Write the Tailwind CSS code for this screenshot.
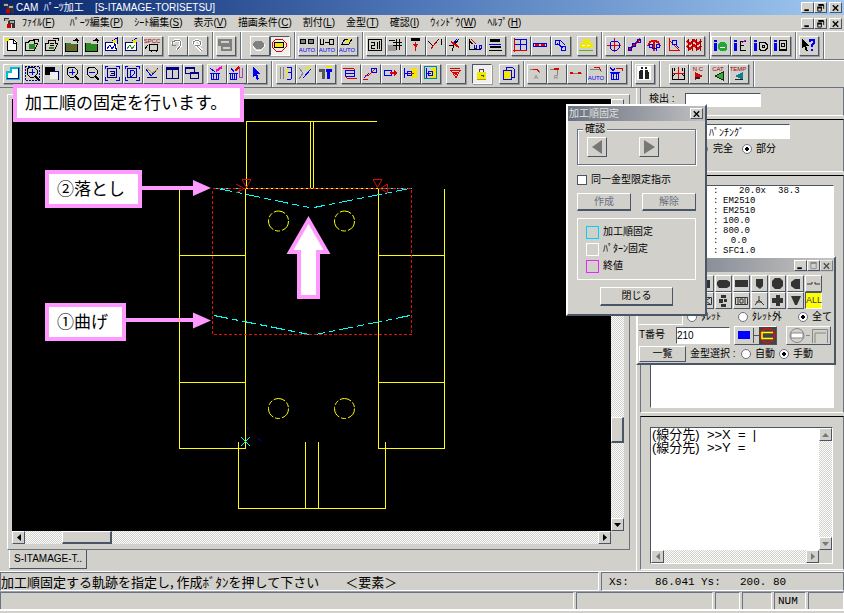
<!DOCTYPE html>
<html lang="ja">

<head>
    <meta charset="UTF-8">
    <meta name="viewport" content="width=device-width, initial-scale=1.0">
    <title>CAM パーツ加工</title>
    <script src="https://cdn.jsdelivr.net/npm/@tailwindcss/browser@4"></script>
</head>

<body class="h-screen min-h-[560px] flex flex-col overflow-hidden bg-[#d2d0ca] text-black text-[10px] leading-[12px] font-['Liberation_Sans','Noto_Sans_CJK_JP',sans-serif]">
    <!-- title bar -->
    <header class="h-[15px] shrink-0 flex items-center pl-[3px] pr-[2px] text-white bg-linear-to-r from-[#0a246a] via-[#5078b8] to-[#a0c8f0]">
        <svg class="w-3 h-3" viewBox="0 0 12 12" shape-rendering="crispEdges"><path d="M0 1h5v3H0zM4 3h7v8H8V7H4z" fill="#333"/><path d="M1 2h4v2H1zM6 4h4v2H6z" fill="#aaa"/><path d="M3 7h4v4H3z" fill="#c00"/></svg>
        <h1 class="flex-1 pl-px whitespace-pre">CAM  ﾊﾟｰﾂ加工    [S-ITAMAGE-TORISETSU]</h1>
        <div class="flex text-black" data-win="restore"></div>
    </header>

    <!-- menu bar -->
    <nav class="h-4 shrink-0 flex items-center pl-1 pr-[2px]">
        <svg class="w-3 h-3 mr-[6px]" viewBox="0 0 12 12" shape-rendering="crispEdges"><path d="M0 1h5v3H0zM4 3h7v8H8V7H4z" fill="#333"/><path d="M1 2h4v2H1zM6 4h4v2H6z" fill="#aaa"/><path d="M3 7h4v4H3z" fill="#c00"/></svg>
        <div class="flex-1 flex gap-[11px] whitespace-nowrap">
            <button class="mr-1">ﾌｧｲﾙ(<u>F</u>)</button>
            <button>ﾊﾟｰﾂ編集(<u>P</u>)</button>
            <button>ｼｰﾄ編集(<u>S</u>)</button>
            <button>表示(<u>V</u>)</button>
            <button>描画条件(<u>C</u>)</button>
            <button>割付(<u>L</u>)</button>
            <button>金型(<u>T</u>)</button>
            <button>確認(<u>I</u>)</button>
            <button>ｳｨﾝﾄﾞｳ(<u>W</u>)</button>
            <button>ﾍﾙﾌﾟ(<u>H</u>)</button>
        </div>
        <div class="flex" data-win="restore"></div>
    </nav>

    <div id="bar1" class="h-[29px] shrink-0 flex items-center border-t border-t-white border-b border-b-gray-500"></div>
    <div id="bar2" class="h-7 shrink-0 flex items-center border-t border-t-white border-b border-b-gray-500"></div>

    <main class="relative flex-1 min-h-0 flex">
        <!-- drawing view -->
        <section class="flex-1 min-w-0 flex flex-col pt-[6px] pl-[7px] pr-[6px] pb-[2px]">
            <div class="flex-1 min-h-0 grid grid-cols-[1fr_13px] grid-rows-[1fr_13px] pt-1 pl-1 pr-[5px] pb-[5px] border border-t-white border-l-white border-r-gray-500 border-b-gray-500">
                <div class="relative bg-black min-h-0">
                    <svg class="w-[599px] h-[431px] max-h-full" viewBox="12 99 599 431" preserveAspectRatio="xMinYMin slice" fill="none">
                        <g stroke="#ff0" shape-rendering="crispEdges">
                            <path d="M246.5 188V121.5H377M310.5 122v66M313.5 122v66M246 188.5h132"/>
                            <path d="M179.5 189v259.500H245.500V188M179 255.500h67M179 382.500h67"/>
                            <path d="M444.500 189v259.500H378.500V188M378 255.500h67M378 382.500h67"/>
                            <path d="M238.500 442v66.500H385.500V442M305.500 442v66M318.500 442v66"/>
                        </g>
                        <g stroke="#ff0" stroke-dasharray="12 2 5 2">
                            <circle cx="278.500" cy="221" r="10"/><circle cx="344.500" cy="221" r="10"/>
                            <circle cx="278.500" cy="408.500" r="10"/><circle cx="344.500" cy="408.500" r="10"/>
                        </g>
                        <g stroke="#0ff" stroke-dasharray="14 4 7 4" shape-rendering="crispEdges">
                            <path d="M216 188.500h30M379 188.500h33"/>
                            <path d="M218 188.500L309 207.500M410 188.500L314 207.500M214 315.500L309 334.500M410 315.500L316 334.500"/>
                        </g>
                        <path d="M212.500 188.500h199v146h-199z" stroke="#e01010" stroke-dasharray="3 2" shape-rendering="crispEdges"/>
                        <path d="M242 179.500h9l-4.500 8zM373 179.500h9l-4.500 8zM236 184l8 4.500-8 4.500M387.500 184v9l-7-4.500z" stroke="#d01010"/>
                        <path d="M241 437l9 9M250 437l-9 9" stroke="#0ff"/>
                        <path d="M247 428l2 1M258 438l3 3" stroke="#00f"/>
                        <path d="M142 188h52M126 320h68" stroke="#f9f" stroke-width="4"/>
                        <path d="M193 180l18 8-18 8zM193 312.500l18 8-18 8z" fill="#f9f"/>
                        <path d="M308.500 220L327 252h-9v45h-19v-45h-9z" fill="#fff" stroke="#f9f" stroke-width="4"/>
                    </svg>
                    <!-- callouts -->
                    <p class="absolute left-px -top-[15px] w-[231px] h-[38px] border-4 border-[#ff99ff] bg-white px-2 text-[17px] leading-[32px] whitespace-nowrap">加工順の固定を行います。</p>
                    <p class="absolute left-[33px] top-[71px] w-[97px] h-[38px] border-4 border-[#ff99ff] bg-white px-2 text-[17px] leading-[32px] whitespace-nowrap">②落とし</p>
                    <p class="absolute left-[33px] top-[204px] w-[81px] h-[38px] border-4 border-[#ff99ff] bg-white px-2 text-[17px] leading-[32px] whitespace-nowrap">①曲げ</p>
                </div>
                <div class="flex flex-col bg-[repeating-conic-gradient(#ffffff_0_25%,#d2d0ca_0_50%)] bg-[size:2px_2px]">
                    <button class="h-[13px] border border-white border-r-gray-600 border-b-gray-600 bg-[#d2d0ca] flex items-center justify-center" aria-label="上へ"><svg class="w-[7px] h-1" viewBox="0 0 7 4"><path d="M0 4L3.500 0 7 4z"/></svg></button>
                    <div class="flex-1"></div>
                    <div class="h-[26px] mb-[75px] border border-white border-r-2 border-b-2 border-r-gray-600 border-b-gray-600 bg-[#d2d0ca]"></div>
                    <button class="h-[13px] border border-white border-r-gray-600 border-b-gray-600 bg-[#d2d0ca] flex items-center justify-center" aria-label="下へ"><svg class="w-[7px] h-1" viewBox="0 0 7 4"><path d="M0 0L3.500 4 7 0z"/></svg></button>
                </div>
                <div class="flex bg-[repeating-conic-gradient(#ffffff_0_25%,#d2d0ca_0_50%)] bg-[size:2px_2px]">
                    <button class="w-[13px] border border-white border-r-gray-600 border-b-gray-600 bg-[#d2d0ca] flex items-center justify-center" aria-label="左へ"><svg class="w-1 h-[7px]" viewBox="0 0 4 7"><path d="M4 0L0 3.500 4 7z"/></svg></button>
                    <div class="w-[50px] ml-[37px] border border-white border-r-2 border-b-2 border-r-gray-600 border-b-gray-600 bg-[#d2d0ca]"></div>
                    <div class="flex-1"></div>
                    <button class="w-[13px] border border-white border-r-gray-600 border-b-gray-600 bg-[#d2d0ca] flex items-center justify-center" aria-label="右へ"><svg class="w-1 h-[7px]" viewBox="0 0 4 7"><path d="M0 0l4 3.500L0 7z"/></svg></button>
                </div>
            </div>
            <button class="w-[78px] h-[19px] ml-[2px] pl-1 text-left whitespace-nowrap border border-t-0 border-l-white border-r-gray-600 border-b-gray-600">S-ITAMAGE-T..</button>
        </section>

        <!-- side panels -->
        <aside class="w-[208px] shrink-0 flex flex-col gap-[3px] pl-[3px] border-l border-l-white">
            <div class="h-7 flex items-start pt-[5px] pl-2 border-x border-x-gray-500 border-b border-b-white">
                <label for="find" class="w-9">検出 :</label>
                <input id="find" class="w-[76px] h-[14px] bg-white border border-t-gray-600 border-l-gray-600 border-white">
            </div>
            <div class="h-[53px] flex flex-col gap-1 pt-1 border border-x-gray-500 border-t-black border-b-white">
                <input aria-label="加工" value="ﾊﾟﾝﾁﾝｸﾞ" class="ml-[9px] w-[140px] h-[15px] pl-[58px] bg-white border border-t-gray-600 border-l-gray-600 border-white">
                <div class="flex items-center ml-[57px]">
                    <label class="w-11 flex items-center gap-[5px]"><input type="radio" name="area" class="appearance-none w-[10px] h-[10px] rounded-full border border-gray-500 bg-white checked:bg-[radial-gradient(#000_30%,#fff_35%)]">完全</label>
                    <label class="flex items-center gap-1"><input type="radio" name="area" checked class="appearance-none w-[10px] h-[10px] rounded-full border border-gray-500 bg-white checked:bg-[radial-gradient(#000_30%,#fff_35%)]">部分</label>
                </div>
            </div>
            <div class="flex-1 min-h-0 p-[9px] pb-1 border border-x-gray-500 border-t-black border-b-white">
                <div class="h-full bg-white border border-t-gray-600 border-l-gray-600 border-white pl-[62px] overflow-hidden text-[9px] leading-[10px] font-['Liberation_Mono',monospace]">
                    <dl id="info" class="grid grid-cols-[10px_24px_1fr]"></dl>
                </div>
            </div>
            <div class="h-[154px] mb-px pt-[10px] pb-[5px] pl-[9px] pr-[10px] border border-x-gray-500 border-t-black border-b-white">
                <div class="h-full grid grid-cols-[1fr_13px] grid-rows-[1fr_13px] border border-t-gray-600 border-l-gray-600 border-white">
                    <textarea aria-label="座標入力" class="resize-none overflow-hidden bg-white pl-px text-[13px] leading-[13px]">(線分先)  &gt;&gt;X  =  |
(線分先)  &gt;&gt;Y  =</textarea>
                    <div class="flex flex-col justify-between bg-[repeating-conic-gradient(#ffffff_0_25%,#d2d0ca_0_50%)] bg-[size:2px_2px]">
                        <button class="h-[13px] border border-white border-r-gray-600 border-b-gray-600 bg-[#d2d0ca] flex items-center justify-center" aria-label="上へ"><svg class="w-[7px] h-1" viewBox="0 0 7 4" fill="#777"><path d="M0 4L3.500 0 7 4z"/></svg></button>
                        <button class="h-[13px] border border-white border-r-gray-600 border-b-gray-600 bg-[#d2d0ca] flex items-center justify-center" aria-label="下へ"><svg class="w-[7px] h-1" viewBox="0 0 7 4" fill="#777"><path d="M0 0L3.500 4 7 0z"/></svg></button>
                    </div>
                    <div class="flex justify-between bg-[repeating-conic-gradient(#ffffff_0_25%,#d2d0ca_0_50%)] bg-[size:2px_2px]">
                        <button class="w-[13px] border border-white border-r-gray-600 border-b-gray-600 bg-[#d2d0ca] flex items-center justify-center" aria-label="左へ"><svg class="w-1 h-[7px]" viewBox="0 0 4 7" fill="#777"><path d="M4 0L0 3.500 4 7z"/></svg></button>
                        <button class="w-[13px] border border-white border-r-gray-600 border-b-gray-600 bg-[#d2d0ca] flex items-center justify-center" aria-label="右へ"><svg class="w-1 h-[7px]" viewBox="0 0 4 7" fill="#777"><path d="M0 0l4 3.500L0 7z"/></svg></button>
                    </div>
                </div>
            </div>
        </aside>

        <!-- tool palette window -->
        <div class="absolute right-2 top-[168px] w-[200px] h-[109px] flex flex-col bg-[#d2d0ca] border-2 border-t-white border-l-white border-r-gray-600 border-b-gray-600">
            <div class="h-[14px] shrink-0 flex items-center justify-end pr-px bg-linear-to-r from-gray-500 to-[#c8c6c2]" data-win="max"></div>
            <div id="tools" class="grid grid-cols-[repeat(7,17px)] gap-x-px justify-end pt-[3px] pr-3"></div>
            <div class="h-4 shrink-0 flex items-center pl-px">
                <div class="w-11 h-full flex items-start justify-center border-b border-r border-white"><i class="w-2 h-[5px] bg-red-700"></i></div>
                <label class="w-[51px] flex items-center gap-1 ml-1"><input type="radio" name="turret" class="appearance-none w-[10px] h-[10px] rounded-full border border-gray-500 bg-white checked:bg-[radial-gradient(#000_30%,#fff_35%)]">ﾀﾚｯﾄ</label>
                <label class="w-[60px] flex items-center gap-1"><input type="radio" name="turret" class="appearance-none w-[10px] h-[10px] rounded-full border border-gray-500 bg-white checked:bg-[radial-gradient(#000_30%,#fff_35%)]">ﾀﾚｯﾄ外</label>
                <label class="flex items-center gap-1 whitespace-nowrap"><input type="radio" name="turret" checked class="appearance-none w-[10px] h-[10px] rounded-full border border-gray-500 bg-white checked:bg-[radial-gradient(#000_30%,#fff_35%)]">全て</label>
            </div>
            <div class="h-5 shrink-0 flex items-center pl-px">
                <label for="tno" class="w-[37px] whitespace-nowrap">T番号</label>
                <input id="tno" value="210" class="w-[54px] h-[17px] bg-white border border-t-gray-600 border-l-gray-600 border-white">
                <button aria-label="形状" class="ml-1 w-[43px] h-[19px] border border-white border-r-gray-600 border-b-gray-600">
                    <svg class="w-full h-full" viewBox="0 0 41 17"><path d="M3 4h12v8H3z" fill="#00f"/><path d="M18.500 1v15" stroke="#555"/><path d="M19 8.500h5" stroke="#555"/><path d="M24 0h17v17H24z" fill="#444"/><circle cx="32.500" cy="8.500" r="7" fill="none" stroke="#e01010" stroke-width="1.500"/><path d="M38 5.500H27v6h11" fill="none" stroke="#ff0" stroke-width="1.500"/></svg>
                </button>
                <button aria-label="方向" class="ml-[9px] w-[45px] h-[19px] border border-white border-r-gray-600 border-b-gray-600">
                    <svg class="w-full h-full" viewBox="0 0 43 17" fill="none" stroke="#888"><circle cx="10" cy="8.500" r="7"/><path d="M4 6h12v5H4z" fill="#fff"/><path d="M19 8.500h4M25.500 16V2.500h15V16M28 16V6h11" /></svg>
                </button>
            </div>
            <div class="h-[17px] shrink-0 flex items-center pl-px">
                <button class="w-[47px] h-4 border border-white border-r-gray-600 border-b-gray-600">一覧</button>
                <span class="w-[55px] pl-1 whitespace-nowrap">金型選択 :</span>
                <label class="w-[38px] flex items-center gap-1 whitespace-nowrap"><input type="radio" name="sel" class="appearance-none w-[10px] h-[10px] rounded-full border border-gray-500 bg-white checked:bg-[radial-gradient(#000_30%,#fff_35%)]">自動</label>
                <label class="flex items-center gap-1 whitespace-nowrap"><input type="radio" name="sel" checked class="appearance-none w-[10px] h-[10px] rounded-full border border-gray-500 bg-white checked:bg-[radial-gradient(#000_30%,#fff_35%)]">手動</label>
            </div>
        </div>

        <!-- dialog -->
        <div class="absolute right-[137px] top-4 w-[141px] h-[212px] flex flex-col bg-[#d2d0ca] border-2 border-t-white border-l-white border-r-gray-600 border-b-gray-600">
            <div class="h-[15px] shrink-0 flex items-center justify-between pl-px pr-[2px] bg-linear-to-r from-gray-500 to-[#c0c0c0] text-[#e4e2dc]">
                <h2>加工順固定</h2>
                <div class="flex text-black" data-win="close"></div>
            </div>
            <div class="flex-1 flex flex-col px-[9px] pt-[2px]">
                <fieldset class="h-[42px] flex justify-between pl-[9px] pr-9 border border-gray-500 shadow-[inset_1px_1px_#fff,1px_1px_#fff]">
                    <legend class="-ml-1 px-[2px] bg-[#d2d0ca]">確認</legend>
                    <button aria-label="前へ" class="w-5 h-5 mt-[2px] border border-white border-r-gray-600 border-b-gray-600"><svg class="w-full h-full" viewBox="0 0 18 18" fill="#777"><path d="M14 2v14L4 9z"/></svg></button>
                    <button aria-label="次へ" class="w-5 h-5 mt-[2px] border border-white border-r-gray-600 border-b-gray-600"><svg class="w-full h-full" viewBox="0 0 18 18" fill="#777"><path d="M4 2v14l11-7z"/></svg></button>
                </fieldset>
                <label class="flex items-center gap-1 mt-[9px] whitespace-nowrap"><input type="checkbox" class="appearance-none w-[10px] h-[10px] bg-white border border-gray-600">同一金型限定指示</label>
                <div class="flex justify-between mt-[7px] text-gray-500">
                    <button class="w-[54px] h-[18px] border border-white border-r-gray-600 border-b-gray-600 border-b-2" disabled>作成</button>
                    <button class="w-[54px] h-[18px] border border-white border-r-gray-600 border-b-gray-600 border-b-2" disabled>解除</button>
                </div>
                <ul class="h-[62px] mt-[7px] flex flex-col justify-center gap-[4px] pl-2 border border-white">
                    <li class="flex items-center gap-1"><i class="w-[13px] h-[13px] border border-cyan-400"></i>加工順固定</li>
                    <li class="flex items-center gap-1"><i class="w-[13px] h-[13px] border border-white"></i>ﾊﾟﾀｰﾝ固定</li>
                    <li class="flex items-center gap-1"><i class="w-[13px] h-[13px] border border-fuchsia-500"></i>終値</li>
                </ul>
                <button class="w-[73px] h-[19px] mt-[7px] mx-auto border border-white border-r-gray-600 border-b-gray-600 border-b-2">閉じる</button>
            </div>
        </div>
    </main>

    <!-- status bars -->
    <footer class="shrink-0 border-t border-t-white text-[13px] leading-[16px] whitespace-nowrap">
        <div class="h-5 flex gap-[2px] border-b border-b-gray-400">
            <p class="flex-1 flex items-center gap-[26px] border border-gray-500 border-b-white border-r-white font-['Noto_Sans_CJK_JP',sans-serif]"><span>加工順固定する軌跡を指定し, 作成ﾎﾞﾀﾝを押して下さい</span><span>＜要素＞</span></p>
            <p class="w-[243px] flex items-center pl-[7px] border border-gray-500 border-b-white text-[11px] font-['Liberation_Mono',monospace]"><span class="w-[46px]">Xs:</span><span class="w-[46px]">86.041</span><span class="w-[39px]">Ys:</span><span>200. 80</span></p>
        </div>
        <div class="h-[19px] mb-[2px] flex gap-[2px] border-b-2 border-b-white text-[11px]">
            <p class="flex-1 border border-gray-500 border-r-white border-b-0"></p>
            <p class="w-[137px] border border-gray-500 border-r-white border-b-0"></p>
            <p class="w-[25px] border border-gray-500 border-r-white border-b-0"></p>
            <p class="w-[30px] border border-gray-500 border-r-white border-b-0"></p>
            <p class="w-8 pl-[3px] flex items-center border border-gray-500 border-r-white border-b-0 font-['Liberation_Mono',monospace]">NUM</p>
            <p class="w-[36px] border border-gray-500 border-r-white border-b-0"></p>
        </div>
    </footer>

    <script>
        // small helpers for the 16x16 icons
        const s = (d, c = '#000', w = 1) => `<path d="${d}" fill="none" stroke="${c}" stroke-width="${w}"/>`;
        const f = (d, c = '#000') => `<path d="${d}" fill="${c}"/>`;
        const t = (str, c, y = 15, size = 6) => `<text x="8" y="${y}" font-size="${size}" text-anchor="middle" fill="${c}">${str}</text>`;
        const B = '#0000f0', R = '#e00000', Y = '#f0e800', G = '#808080', N = '#000080';

        const folder = f('M1 6h5l1 1h7v7H1z', '#2a8a20') + s('M1.500 6v8h12V7M9 3h4v3') + f('M12 1l3 3h-4z');
        const info = f('M2 3h3v2H2zM2 6h3v8H2z', B);

        // [margin class, separator before, icons...]
        const bar1 = [
            ['ml-[3px]', 0,
                ['新規', f('M3 2h7l3 3v9H3z', '#fff') + s('M3.500 2.500h6l3 3v8h-9zM9.500 2v4h3') + f('M1 1h4v3H1z', Y)],
                ['開く', s('M1.500 13.500v-8h3l1-2h5v3h3l-3 7zM9 2h5v3') + f('M5 7h6v5H5z', '#2a8a20')],
                ['シートを開く', s('M1.500 13.500v-7h3v-3h7v3h2l-3 7zM9 1h5v3M6 6h4M6 8h4') + f('M5 10h5v2H5z', '#2a8a20')],
                ['保存', folder + f('M2 8h11v5H2z', '#6a6030')],
                ['別名保存', folder],
                ['部品を開く', f('M1 6h12v8H1z', '#fff') + s('M1.500 5.500h9l2 8h-11zM8 4l5-3v6', N) + s('M3 12l3-4 2 4 3-4', B) + f('M9 3h3v3H9z', Y)],
                ['部品保存', f('M1 6h12v8H1z', '#fff') + s('M1.500 5.500h11v8h-11zM8 4l5-3', N) + s('M3 12l3-4 2 4 3-4', '#20a020') + f('M9 3h3v3H9z', Y)],
                ['材質', t('SPCC', '#a00000', 6, 6) + s('M5.500 7.500h8v6h-8zM1 12l3-4M7 13v2M12 13v2')]],
            ['ml-[5px]', 0,
                ['元に戻す', s('M3 7c2-5 9-5 9 0 0 3-3 3-4 6', '#fff', 3) + s('M3 7c2-5 9-5 9 0 0 3-3 3-4 6M3 4v4h4', G)],
                ['やり直し', s('M4 7c0-5 8-4 8 0-1 2-4 2-6 1M8 9l5 5M4 4l3 4', '#fff', 3) + s('M4 7c0-5 8-4 8 0-1 2-4 2-6 1M8 9l5 5', G)]],
            ['ml-[2px]', 1, ['印刷', f('M1 2h14v7H1zM4 8h11v6H4z', G) + f('M4 4h8v2H4zM6 10h7v2H6z', '#d2d0ca')]],
            ['ml-2', 1,
                ['停止', s('M5 4h5l3 3v3l-3 3H5l-3-3V7z', '#fff') + f('M5 4h5l3 3v3l-3 2H5L2 9V6z', G)],
                ['シート表示', s('M5 2h6l4 4v4l-4 4H5l-4-4V6z', R) + f('M4 6h8v4H4z', Y) + s('M3.500 5.500h9v5h-9z'), 1]],
            ['ml-[2px]', 1,
                ['自動割付', s('M1.500 2.500h5v4h-5zM9.500 2.500h5v4h-5z') + f('M2 3h4v3H2zM10 3h4v3h-4z', G) + t('AUTO', B)],
                ['自動配置', s('M1.500 2v5h3V2M6 5h4M10.500 2.500h4v5h-4z') + t('AUTO', B)],
                ['自動編集', s('M3 7l3-5h7l-3 5z') + f('M6 6l3-4h3L9 6z', Y) + t('AUTO', B)]],
            ['ml-[2px]', 1,
                ['配列', s('M1.500 2.500h13v11h-13zM4 5h3v3H4v3h4M10 5v7M12 4v8')],
                ['格子', f('M1 8h8v6H1z', '#999') + s('M2 3h6M6 5.500h9M6 8.500h9M9.500 2v11M12.500 2v11')],
                ['金型', f('M4 1h9v3H4z') + s('M8.500 5v9', R) + f('M6 7h5l-2 4z', R)],
                ['角', s('M1 4l5 5 6-7M14 2v6', '#000') + s('M6 9l4-5M4 12l2-3', R)],
                ['切断', s('M2 8h5l5-6M7 8l-2 6', '#000') + s('M4 5l8 5', R, 2) + s('M7 6l3-4', B)],
                ['コーナー', s('M2 2v10h12M2 4l4 3', '#000') + s('M4 2l5 5', R) + s('M7 8v3h2V8M12 8h2v3h-2z', B)],
                ['層', f('M3 2h10v3H3zM3 9h11v2H3zM2 13h13v1H2z') + s('M2 7h12', B)]],
            ['ml-[5px]', 0,
                ['表', s('M2.500 2.500h12v11h-12zM8.500 2v12M2 7.500h12', B) + s('M2 1v14M1 13h14', R)],
                ['幅', s('M1.500 6.500h13v3h-13z', B) + s('M3 8h4M9 8h4', R, 2)],
                ['連結', s('M3 3h4v4H3zM9 9h4v4H9zM5 6l6 5M8 3l5 5', B)]],
            ['ml-[6px]', 0, ['警告', f('M5 2h7v4H5zM2 6h13v5H2z', Y) + s('M1 13.500h14', '#60b020', 1) + s('M4 8h3M9 8h3', '#fff')]],
            ['ml-[2px]', 1,
                ['原点', s('M8.500 1v14M1 8.500h14', R) + s('M6 4h5l2 2v5l-2 2H6l-2-2V6z', B)],
                ['線', s('M2 14L14 2', R, 2) + s('M2.500 10.500h3v3h-3zM6.500 6.500h3v3h-3zM11.500 2.500h3v3h-3z', B)],
                ['円弧', s('M2 9c2-7 10-7 12 0M8 3v11', R, 2) + s('M3 7h3v3H3zM10 7h3v3h-3zM6 11h4v3', B)],
                ['角度', s('M3 1v12h11M3 3l10 10', R, 1) + s('M6 3h4v4H6zM9 7l4 4', B)],
                ['格子点', s('M1 4l3 3 4-4 4 4 3-3M1 9l3 3 4-4 4 4 3-3', R, 2) + s('M2 2v12M6 2v12M10 2v12M14 2v12', '#900')]],
            ['', 1,
                ['情報1', info + f('M8 5h5l2 3v4l-2 2H8l-2-2V7z', '#20a830') + s('M8 10h5', '#fff')],
                ['情報2', info + s('M14 4H8v9h6M8 8h4') + s('M10 6l4-3', '#c0c')],
                ['情報3', info + s('M8 5.500h5l2 2v4l-2 2H9l-2-2v-4zM10 8h2v2h-2z')],
                ['情報4', info + s('M7.500 3.500h7v10h-7zM9 6h3v3H9zM8 12h6')]],
            ['ml-[2px]', 1, ['ヘルプ', f('M2 2l7 7H6l2 5H6L4 9l-2 2z') + s('M10 5V3h4v3l-2 2v2M12 12v2', B, 1.5)]],
            ['ml-[5px]', 1]
        ];
        const lens = s('M5 2h5l3 3v4l-3 3H6L3 9V5z') + s('M11 11l4 4', '#000', 2);
        const frame = s('M1 4V1h3M12 1h3v3M15 12v3h-3M4 15H1v-3', B);
        const bar2 = [
            ['ml-[3px]', 0,
                ['全体', f('M2 6h5V3h7v10H2z', '#fff') + s('M2.500 6.500h4v-4h8v11h-12z', '#00c0d0', 2) + s('M3 13.500h12M14.500 3v10', N)],
                ['範囲拡大', '<path d="M1 1h14v14H1z" fill="none" stroke="#000080" stroke-dasharray="2 1"/>' + lens + s('M5 7h6M8 4v6', B)],
                ['窓', f('M1 2h10v8H1z') + f('M6 6h8v8H6z', '#eee') + s('M6 6.500h8v8', N)],
                ['拡大', lens + s('M5 7h6M8 4v6', B)],
                ['縮小', lens + s('M5 7h6', B)],
                ['前画面', frame + s('M3.500 3.500h9v9h-9zM6 6h4v4H6M7 8h3', N)],
                ['初期画面', frame + s('M3.500 3.500h9v9h-9z', N) + s('M6 5v6h2l2-2V6L8 5z', B)],
                ['再描画', s('M2 4l5 7 7-8', B) + s('M3 3l5 5 6-4', '#c0a000', 1) + s('M3 12h10', N)],
                ['横並べ', s('M2.500 2.500h12v11h-12zM8.500 3v10', N) + f('M2 2h13v3H2z', N)],
                ['重ね', s('M1.500 2.500h9v6h-9zM6.500 7.500h8v6h-8z', N) + f('M1 2h10v2H1zM6 7h9v2H6z', N)]],
            ['ml-1', 0,
                ['削除', s('M3.500 8h7v6h-7zM2 8h10M5 9v5M8 9v5M2 3l5 4', B) + s('M8 6l6-4', '#f0c', 2)],
                ['部分削除', s('M2.500 8h6v6h-6zM1 8h9M4 9v5M6 9v5M3 3l3 4', B) + s('M7 6l4-4', R, 2) + s('M11.500 3v9h3V3', '#a4a')],
                ['選択', f('M5 2l7 7H9l2 5-2 1-2-5-2 2z', B)]],
            ['ml-[3px]', 1,
                ['寸法', s('M3 2v12M6 2v12', G) + s('M14 2v12M10 2h4M10 14h4M11 7h3', B) + s('M9 3v10', Y)],
                ['斜め', s('M2 3l4 5-4 6', G) + s('M6 13l8-9', B, 1) + s('M9 3h5', Y, 2)],
                ['型押し', f('M2 4h6v3H2zM5 7h3v7H5z', '#555') + f('M9 4h6v3H9zM10 6h3v8h-3z', B) + s('M9 2h6', Y, 2)]],
            ['ml-[5px]', 0,
                ['順序1', s('M3.500 5.500h9v6h-9zM4 8h8', B) + s('M1 3h10l2 2M15 13H5l-2-2', R)],
                ['順序2', s('M2 13l5-5M9 3h5v4H9z', B) + s('M3 10h4L13 4M1 14h5', R)],
                ['移動', s('M2.500 5.500h7v5h-7z', B) + s('M8 8h6', R, 2) + f('M12 5l3 3-3 3z', R)],
                ['加工1', f('M9 3h6v10H9z', Y) + s('M2 3v10M2 8h6M5 6v4h4V6z', B) + s('M8 8h4', R)],
                ['加工2', s('M2.500 1.500h12v12h-12z', '#088') + f('M9 3h5v10H9z', Y) + s('M4 3v10M4 8h5M6 6v4h4V6z', B)]],
            ['ml-[5px]', 0, ['下向き', s('M3 3.500h10M4 5.500h9l-4 7z', R) + f('M6 7h5l-2 4z', R)]],
            ['ml-[6px]', 0, ['固定', f('M4 7h9v7H4z', Y) + s('M6.500 7V4h4v3M8 10h2v2', '#444') + s('M4 14h9', '#a8a000'), 1]],
            ['ml-[7px]', 0, ['複写', f('M4 5h8v9H4z', Y) + s('M3.500 5.500h8v9h-8zM6.500 5V2.500h6l2 2v8H12', B)]],
            ['ml-[2px]', 1,
                ['クランプ1', s('M2 4h7M9 4l3 4', G) + s('M5 4h4l2 3', R) + t('A', '#777', 14)],
                ['クランプ2', s('M2 4h9M9 4v6', G) + s('M6 4h5', R, 2) + t('R', '#777', 14)],
                ['クランプ3', s('M2 8h12', G) + s('M2 8h3M10 8h3', R, 2)],
                ['自動クランプ', s('M2 4h9l3 3', G) + s('M6 2h5l2 4', R) + t('AUTO', B)],
                ['クランプ削除', s('M3.500 8h7v6h-7zM2 7h10M5 9v5M8 9v5M2 2l3 4M7 3l-2 3', B) + s('M8 3h6v3', R)]],
            ['ml-[2px]', 1, ['検索', f('M1 1h14v14H1z', '#fff') + f('M4 5h3v9H3V8zM9 5h3l1 3v6H9zM5 2h2v2H5zM9 2h2v2H9z', '#222')]],
            ['ml-2', 1,
                ['シート', s('M2.500 3v11h12V3M3 11l3-3M14 11l-3-3M4 3v3M12 3v3') + s('M8.500 2v12M3 8.500h11', R)],
                ['NC', t('N C', '#a00000', 6) + f('M5 7l8 4-8 4z', R) + f('M5 12h5v2H5z', '#222')],
                ['CAT', t('CAT', '#a00000', 6) + f('M13 7v8l-8-4z', '#30b030') + s('M13 7v8l-8-4z', '#222')],
                ['TEMP', t('TEMP', '#a00000', 6) + f('M13 7v8l-8-4z', '#108090') + s('M5 14h8', '#222')]],
            ['', 1]
        ];
        function drawBar(id, groups) {
            let html = '';
            for (const [margin, sep, ...icons] of groups) {
                if (sep) html += '<i class="w-[2px] h-full ml-[4px] border-l border-l-gray-500 bg-white"></i>';
                html += `<div class="flex ${margin}">`;
                for (const [name, svg, pressed] of icons) {
                    const look = pressed ? 'bg-[#f0efec] border-gray-600 border-r-white border-b-white' : 'border-white border-r-gray-600 border-b-gray-600';
                    html += `<button aria-label="${name}" class="w-5 h-5 border ${look} shadow-[1px_1px_#999]"><svg class="w-[18px] h-[18px]" viewBox="0 0 18 18" shape-rendering="crispEdges">${svg}</svg></button>`;
                }
                html += '</div>';
            }
            document.getElementById(id).innerHTML = html;
        }
        drawBar('bar1', bar1);
        drawBar('bar2', bar2);

        // punch shapes
        const K = '#333';
        const tools = [f('M1 4h11v8H1z', K), f('M3 4h8l3 2v4l-3 2H3L1 9V6z', K), f('M1 4h13v7H1z', K), f('M4 3h7v7l-3 3-4-3z', K), f('M5 2h5l3 3v5l-3 3H5l-3-3V5z', K), f('M12 3v10H7L3 10V6l4-3z', K), s('M1 8h5V6M9 6v2h5', K),
            s('M1.500 4.500h12v7h-12zM3 5l9 6M12 5l-9 6', K), f('M5 2h5v3H5zM3 6h4v4H3zM8 6h3v3H8zM5 11h5v3H5z', K), s('M1.500 4.500h12v7h-12zM4 5v6M11 5v6M6 6h3v4H6z', K), s('M7 3v4L3 12M7 7l5 5M4 9h6', K), f('M6 2h4v3h3v5h-3v3H6v-3H2V5h4z', K), f('M3 3h10l-4 9H7z', K)];
        document.getElementById('tools').innerHTML = tools.map(svg => `<button aria-label="パンチ形状" class="h-[17px] border border-white border-r-gray-600 border-b-gray-600"><svg class="w-full h-full" viewBox="0 0 15 15">${svg}</svg></button>`).join('')
            + '<button class="h-[17px] border border-gray-600 border-r-white border-b-white bg-[#ffff00] text-gray-700 text-[9px] leading-[15px]">ALL</button>';

        // attribute list
        const rows = [['20.0x', '38.3'], ['EM2510'], ['EM2510'], ['100.0'], ['800.0'], ['0.0'], ['SFC1.0']];
        document.getElementById('info').innerHTML = rows.map(([a, b]) => b
            ? `<dt>:</dt><dd></dd><dd class="flex gap-3 -ml-2">${a}<span>${b}</span></dd>`
            : `<dt>:</dt><dd class="${a === '0.0' ? 'text-right' : ''}">${a}</dd><dd></dd>`).join('');

        // window caption buttons
        const marks = {
            min: f('M2 7h5v2H2z'),
            restore: s('M4 2.500h5v4M2.500 5h4v4h-4z') + f('M3 1h6v2H3zM2 4h5v2H2z'),
            max: s('M2.500 2.500h6v6h-6z', '#888') + f('M2 1h7v2H2z', '#888'),
            close: s('M2.500 2.500l6 6M8.500 2.500l-6 6', '#000', 1.5)
        };
        for (const el of document.querySelectorAll('[data-win]')) {
            const kind = el.dataset.win;
            const list = kind === 'close' ? ['close'] : ['min', kind, 'close'];
            el.innerHTML = list.map(k => `<button aria-label="${k}" class="w-[13px] h-[11px] ${k === 'close' && kind === 'restore' ? 'ml-[2px]' : ''} ${k === 'close' && kind === 'max' ? 'opacity-60' : ''} bg-[#d2d0ca] border border-white border-r-gray-600 border-b-gray-600"><svg class="w-full h-full" viewBox="0 0 11 10">${marks[k]}</svg></button>`).join('');
        }
    </script>
</body>

</html>
